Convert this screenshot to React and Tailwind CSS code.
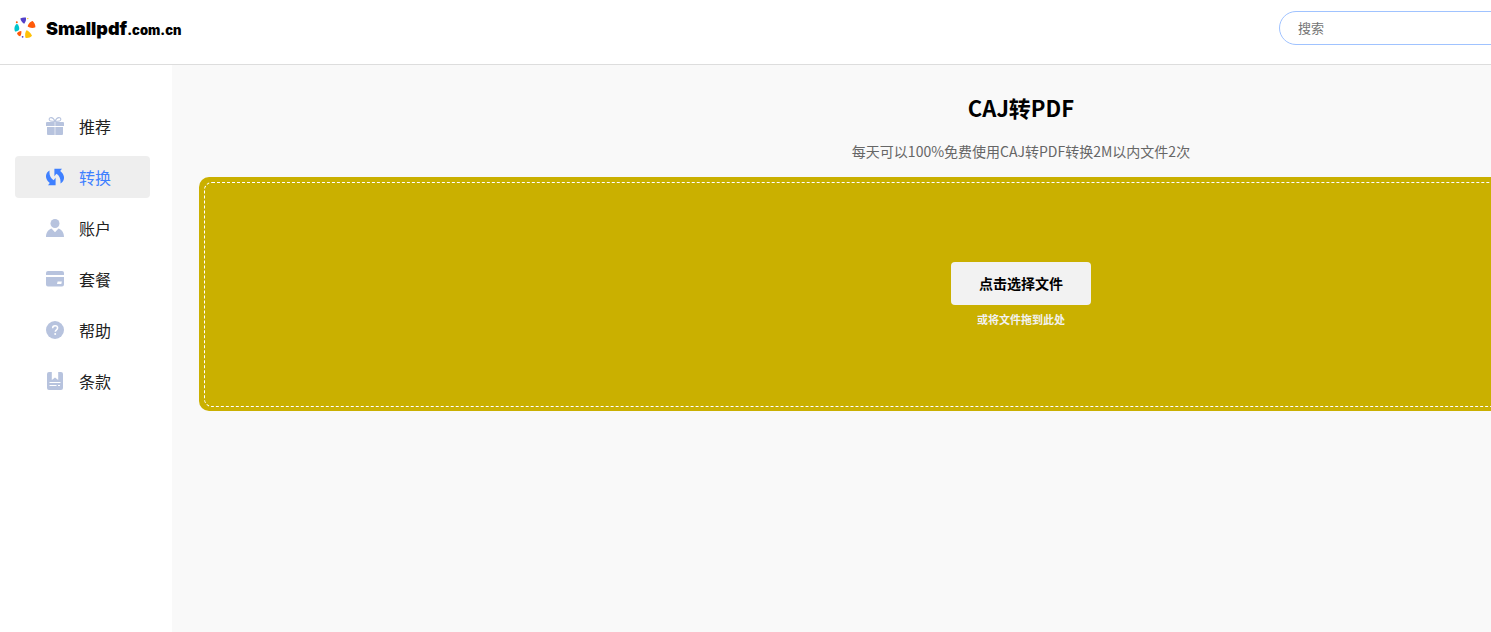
import { useState } from 'react'

const GiftIcon = () => (
  <svg className="h-[18px] w-[18px]" viewBox="0 0 18 18" fill="currentColor" aria-hidden="true">
    <path
      d="M9 4.400C7.600 1.200 5.600.3 4.200.8 2.600 1.400 3 3.600 4.600 4c1.400.4 2.900.4 4.400.4zM9 4.400C10.400 1.200 12.400.3 13.800.8 15.400 1.400 15 3.600 13.400 4c-1.400.4-2.900.4-4.400.4z"
      fill="none"
      stroke="currentColor"
      strokeWidth="1.100"
    />
    <path d="M1 5h7.700v4H0V6a1 1 0 0 1 1-1zM9.300 5H17a1 1 0 0 1 1 1v3H9.300z" />
    <path d="M1 10h7.700v8H2a1 1 0 0 1-1-1zM9.300 10H17v7a1 1 0 0 1-1 1H9.300z" />
  </svg>
)

const ConvertIcon = () => (
  <svg className="h-[18px] w-[18px]" viewBox="0 0 18 18" fill="currentColor" aria-hidden="true">
    <path d="M3.600 2.600C.8 4.300-.4 6.600.1 9.400c.4 2.300 1.700 4 3.700 5.600L2 17.200h7.600V9.800L7.600 12.200C4.600 10.600 2.900 6.500 3.600 2.600z" />
    <path d="M14.400 15.400c2.800-1.700 4-4 3.500-6.800-.4-2.300-1.700-4-3.700-5.600L16 .8H8.400v7.400l2-2.400c3 1.600 4.700 5.700 4 9.600z" />
  </svg>
)

const UserIcon = () => (
  <svg className="h-[18px] w-[18px]" viewBox="0 0 18 18" fill="currentColor" aria-hidden="true">
    <circle cx="9" cy="4.500" r="4.500" />
    <path d="M5.500 9.400 9 13.200l3.500-3.800C15.800 10.700 18 13.500 18 18H0c0-4.500 2.200-7.300 5.500-8.600z" />
  </svg>
)

const CardIcon = () => (
  <svg className="h-[18px] w-[18px]" viewBox="0 0 18 18" fill="currentColor" aria-hidden="true">
    <path d="M2 1h14a2 2 0 0 1 2 2v2H0V3a2 2 0 0 1 2-2z" />
    <path
      fillRule="evenodd"
      d="M0 7h18v7.500a2 2 0 0 1-2 2H2a2 2 0 0 1-2-2zM11.600 11.600 11 14h4.300l.6-2.400z"
    />
  </svg>
)

const HelpIcon = () => (
  <svg className="h-[18px] w-[18px]" viewBox="0 0 18 18" aria-hidden="true">
    <circle cx="9" cy="9" r="9" fill="currentColor" />
    <path
      d="M6.600 7.200C6.600 5.600 7.600 4.800 9.100 4.800s2.500.9 2.500 2.200c0 1.800-2.300 1.800-2.300 3.700"
      fill="none"
      stroke="#fff"
      strokeWidth="1.500"
    />
    <circle cx="9.200" cy="12.900" r="1" fill="#fff" />
  </svg>
)

const TermsIcon = () => (
  <svg className="h-[18px] w-[18px]" viewBox="0 0 18 18" aria-hidden="true">
    <path
      d="M3 0h2.800v8L9 5.600 12.200 8V0H15a2 2 0 0 1 2 2v14a2 2 0 0 1-2 2H3a2 2 0 0 1-2-2V2a2 2 0 0 1 2-2z"
      fill="currentColor"
    />
    <path d="M3.500 10.500h11M3.500 13.500h7M12 13.500h2" stroke="#fff" strokeWidth="1" />
  </svg>
)

const LogoMark = () => (
  <svg className="h-[22px] w-[22px]" viewBox="0 0 22 22" aria-hidden="true">
    <path d="M6.300 1.500C8 .4 10.300.2 11.900.6c.6 1.600-.3 4.900-1.700 6.100C8.700 6.300 6.800 3.600 6.300 1.500z" fill="#5340c8" />
    <path d="M18.700 3.900c1.800 1.700 2.900 4.200 2.700 6.300-2 1.200-6 .9-7.700-.7.200-2.300 2.700-5.200 5-5.600z" fill="#ff5a0a" />
    <path d="M12.500 13.300c2 .7 5 3.500 5.500 5.500-1.500 1.900-4.200 2.500-6.400 2.100-.9-2.200-.5-6 .9-7.600z" fill="#ffc107" />
    <path d="M2.800 6.800c1.700 1 2.700 3.600 2.400 5.500-.6 1.600-2.600 2.600-4.200 2.100C-.2 12 .4 8.600 2.800 6.800z" fill="#00c4cc" />
    <path d="M7.300 14c.3 1.800-.1 4.300-1.100 5.300-1.400 0-3-1.600-3.200-3 .7-1.300 2.700-2.400 4.300-2.300z" fill="#ff5a0a" />
    <circle cx="2.800" cy="5.200" r="1" fill="#ff5a0a" />
    <circle cx="13.800" cy="1.600" r=".7" fill="#ffc107" />
    <circle cx="8.600" cy="19.800" r=".9" fill="#5340c8" />
  </svg>
)

const menuItems = [
  { key: 'recommend', label: '推荐', Icon: GiftIcon },
  { key: 'convert', label: '转换', Icon: ConvertIcon },
  { key: 'account', label: '账户', Icon: UserIcon },
  { key: 'plan', label: '套餐', Icon: CardIcon },
  { key: 'help', label: '帮助', Icon: HelpIcon },
  { key: 'terms', label: '条款', Icon: TermsIcon },
]

const linkClasses = 'flex h-[42px] items-center gap-[15px] rounded pl-[31px] text-base'

const Header = () => {
  const [keyword, setKeyword] = useState('')

  return (
    <header className="flex h-[65px] items-start justify-between border-b border-[#dddddd] bg-white">
      <a href="#home" className="flex h-14 items-center gap-[10px] pl-[14px] text-black">
        <LogoMark />
        <span className="font-['Inter',sans-serif] text-[18px] font-black">
          Smallpdf<span className="text-[13px]">.com.cn</span>
        </span>
      </a>
      <form className="mt-[11px] mr-[91px]" onSubmit={(event) => event.preventDefault()}>
        <input
          type="search"
          aria-label="搜索"
          placeholder="搜索"
          value={keyword}
          onChange={(event) => setKeyword(event.target.value)}
          className="h-[34px] w-[500px] rounded-full border border-[#a0c3ff] bg-white px-[18px] pb-[2px] text-[13px] text-[#333333] outline-none placeholder:text-[#757575]"
        />
      </form>
    </header>
  )
}

const Sidebar = ({ active, onSelect }) => (
  <nav className="w-[172px] shrink-0 bg-white pt-10 pr-[22px] pl-[15px]">
    <ul className="flex flex-col gap-[9px]">
      {menuItems.map(({ key, label, Icon }) => (
        <li key={key}>
          <a
            href={`#${key}`}
            onClick={() => onSelect(key)}
            className={`${linkClasses} ${active === key ? 'bg-[#eeeeee] text-[#3f80ff]' : 'text-[#222222]'}`}
          >
            <span className={active === key ? 'text-[#3f80ff]' : 'text-[#b7c3de]'}>
              <Icon />
            </span>
            {label}
          </a>
        </li>
      ))}
    </ul>
  </nav>
)

const UploadPanel = () => (
  <section className="mt-[14px] rounded-[10px] bg-[#cab000] p-[5px] pb-1">
    <div className="flex h-[225px] flex-col items-center rounded-[8px] border border-dashed border-white pt-[79px]">
      <button
        type="button"
        className="h-[43px] w-[140px] rounded bg-[#f2f2f2] text-[14px] font-bold text-black"
      >
        点击选择文件
      </button>
      <p className="mt-1 text-[11px] leading-5 font-bold text-[#f2f2f2]">或将文件拖到此处</p>
    </div>
  </section>
)

const App = () => {
  const [active, setActive] = useState('convert')

  return (
    <div className="h-screen overflow-hidden font-['Noto_Sans_CJK_SC',sans-serif]">
      <div className="flex h-full min-w-[1870px] flex-col">
        <Header />
        <div className="flex flex-1">
          <Sidebar active={active} onSelect={setActive} />
          <main className="flex-1 bg-[#f9f9f9] px-[27px] pt-[26px]">
            <h1 className="text-center text-[22px] leading-8 font-bold text-black">CAJ转PDF</h1>
            <p className="mt-4 text-center text-[14px] leading-6 text-[#666666]">
              每天可以100%免费使用CAJ转PDF转换2M以内文件2次
            </p>
            <UploadPanel />
          </main>
        </div>
      </div>
    </div>
  )
}

export default App
